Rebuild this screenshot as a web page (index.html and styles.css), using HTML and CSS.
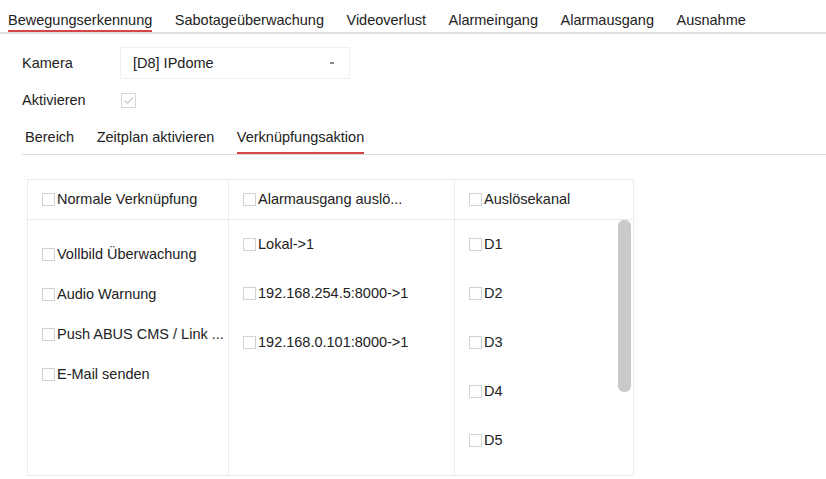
FILE: index.html
```html
<!DOCTYPE html>
<html lang="de">
<head>
<meta charset="utf-8">
<title>Bewegungserkennung</title>
<link rel="stylesheet" href="styles.css">
</head>
<body>
<div class="page">
  <nav class="tabs">
    <span class="tab active">Bewegungserkennung</span>
    <span class="tab">Sabotageüberwachung</span>
    <span class="tab">Videoverlust</span>
    <span class="tab">Alarmeingang</span>
    <span class="tab">Alarmausgang</span>
    <span class="tab">Ausnahme</span>
  </nav>

  <div class="form">
    <div class="row row-camera">
      <span class="label">Kamera</span>
      <div class="select">
        <span class="select-text">[D8] IPdome</span>
        <span class="select-arrow"></span>
      </div>
    </div>
    <div class="row row-enable">
      <span class="label">Aktivieren</span>
      <span class="cb cb-checked">
        <svg viewBox="0 0 14 14" width="14" height="14"><path d="M3 7.2 L6 10 L11.5 3.8" fill="none" stroke="#bdbdbd" stroke-width="1.2"/></svg>
      </span>
    </div>
  </div>

  <nav class="subtabs">
    <span class="subtab">Bereich</span>
    <span class="subtab">Zeitplan aktivieren</span>
    <span class="subtab active">Verknüpfungsaktion</span>
  </nav>

  <div class="table">
    <div class="col col1">
      <div class="head"><span class="item"><span class="cb"></span>Normale Verknüpfung</span></div>
      <div class="body body1">
        <span class="item"><span class="cb"></span>Vollbild Überwachung</span>
        <span class="item"><span class="cb"></span>Audio Warnung</span>
        <span class="item"><span class="cb"></span>Push ABUS CMS / Link ...</span>
        <span class="item"><span class="cb"></span>E-Mail senden</span>
      </div>
    </div>
    <div class="col col2">
      <div class="head"><span class="item"><span class="cb"></span>Alarmausgang auslö...</span></div>
      <div class="body body2">
        <span class="item"><span class="cb"></span>Lokal-&gt;1</span>
        <span class="item"><span class="cb"></span>192.168.254.5:8000-&gt;1</span>
        <span class="item"><span class="cb"></span>192.168.0.101:8000-&gt;1</span>
      </div>
    </div>
    <div class="col col3">
      <div class="head"><span class="item"><span class="cb"></span>Auslösekanal</span></div>
      <div class="body body3">
        <div class="list">
          <span class="item"><span class="cb"></span>D1</span>
          <span class="item"><span class="cb"></span>D2</span>
          <span class="item"><span class="cb"></span>D3</span>
          <span class="item"><span class="cb"></span>D4</span>
          <span class="item"><span class="cb"></span>D5</span>
        </div>
        <div class="track"><div class="thumb"></div></div>
      </div>
    </div>
  </div>
</div>
</body>
</html>
```

FILE: styles.css
```css
html, body {
  margin: 0;
  padding: 0;
  background: #ffffff;
}

.page {
  width: 826px;
  height: 479px;
  overflow: hidden;
  font-family: "Liberation Sans", Arial, sans-serif;
  font-size: 14.5px;
  color: #222222;
}

/* top tabs */
.tabs {
  display: flex;
  gap: 22.5px;
  padding-left: 8px;
  border-bottom: 2px solid #e2e2e2;
  height: 34px;
  box-sizing: border-box;
}

.tab {
  line-height: 17px;
  padding-top: 12px;
  height: 32px;
  box-sizing: border-box;
  white-space: nowrap;
}

.tab.active {
  border-bottom: 2px solid #d64545;
}

/* form */
.form {
  padding-left: 22px;
}

.row {
  display: flex;
  align-items: center;
}

.label {
  width: 98px;
  flex: none;
}

.row-camera {
  margin-top: 13px;
}

.select {
  width: 230px;
  height: 32px;
  box-sizing: border-box;
  border: 1px solid #f0f0f0;
  display: flex;
  align-items: center;
  justify-content: space-between;
  padding: 0 13px 0 12px;
}

.select-arrow {
  width: 4px;
  height: 1.5px;
  background: #888;
  margin-right: 2px;
}

.row-enable {
  margin-top: 7px;
  height: 28px;
}

.cb {
  display: inline-block;
  width: 13px;
  height: 13px;
  box-sizing: border-box;
  border: 1px solid #d2d2d2;
  background: #fff;
  flex: none;
}

.cb-checked {
  width: 15px;
  height: 15px;
  border-color: #d6d6d6;
  margin-left: 1px;
}

.cb-checked svg {
  display: block;
  width: 13px;
  height: 13px;
}

/* sub tabs */
.subtabs {
  display: flex;
  gap: 22.5px;
  margin-left: 22px;
  padding-left: 3px;
  border-bottom: 1.5px solid #dcdcdc;
  height: 41px;
  box-sizing: border-box;
}

.subtab {
  line-height: 17px;
  padding-top: 15px;
  height: 39.5px;
  box-sizing: border-box;
  white-space: nowrap;
}

.subtab.active {
  border-bottom: 2px solid #d64545;
}

/* table */
.table {
  display: flex;
  margin: 24px 0 0 27px;
  width: 607px;
  height: 297px;
  box-sizing: border-box;
  border: 1px solid #ebebeb;
}

.col {
  display: flex;
  flex-direction: column;
  box-sizing: border-box;
}

.col1 { width: 201px; border-right: 1px solid #ebebeb; }
.col2 { width: 226px; border-right: 1px solid #ebebeb; }
.col3 { flex: 1; }

.head {
  height: 40px;
  box-sizing: border-box;
  border-bottom: 1px solid #ebebeb;
  display: flex;
  align-items: center;
  padding-left: 14px;
}

.item {
  display: flex;
  align-items: center;
  gap: 2px;
  white-space: nowrap;
  line-height: 17px;
}

.body {
  flex: 1;
  display: flex;
  flex-direction: column;
  padding-left: 14px;
}

.body1 {
  padding-top: 14px;
}

.body1 .item {
  height: 40px;
}

.body2 .item,
.body3 .item {
  height: 49px;
}

.body3 {
  flex-direction: row;
}

.list {
  flex: 1;
  display: flex;
  flex-direction: column;
}

.track {
  width: 13px;
  margin-right: 2px;
}

.thumb {
  height: 172px;
  background: #c9c9c9;
  border-radius: 6px;
}
```
